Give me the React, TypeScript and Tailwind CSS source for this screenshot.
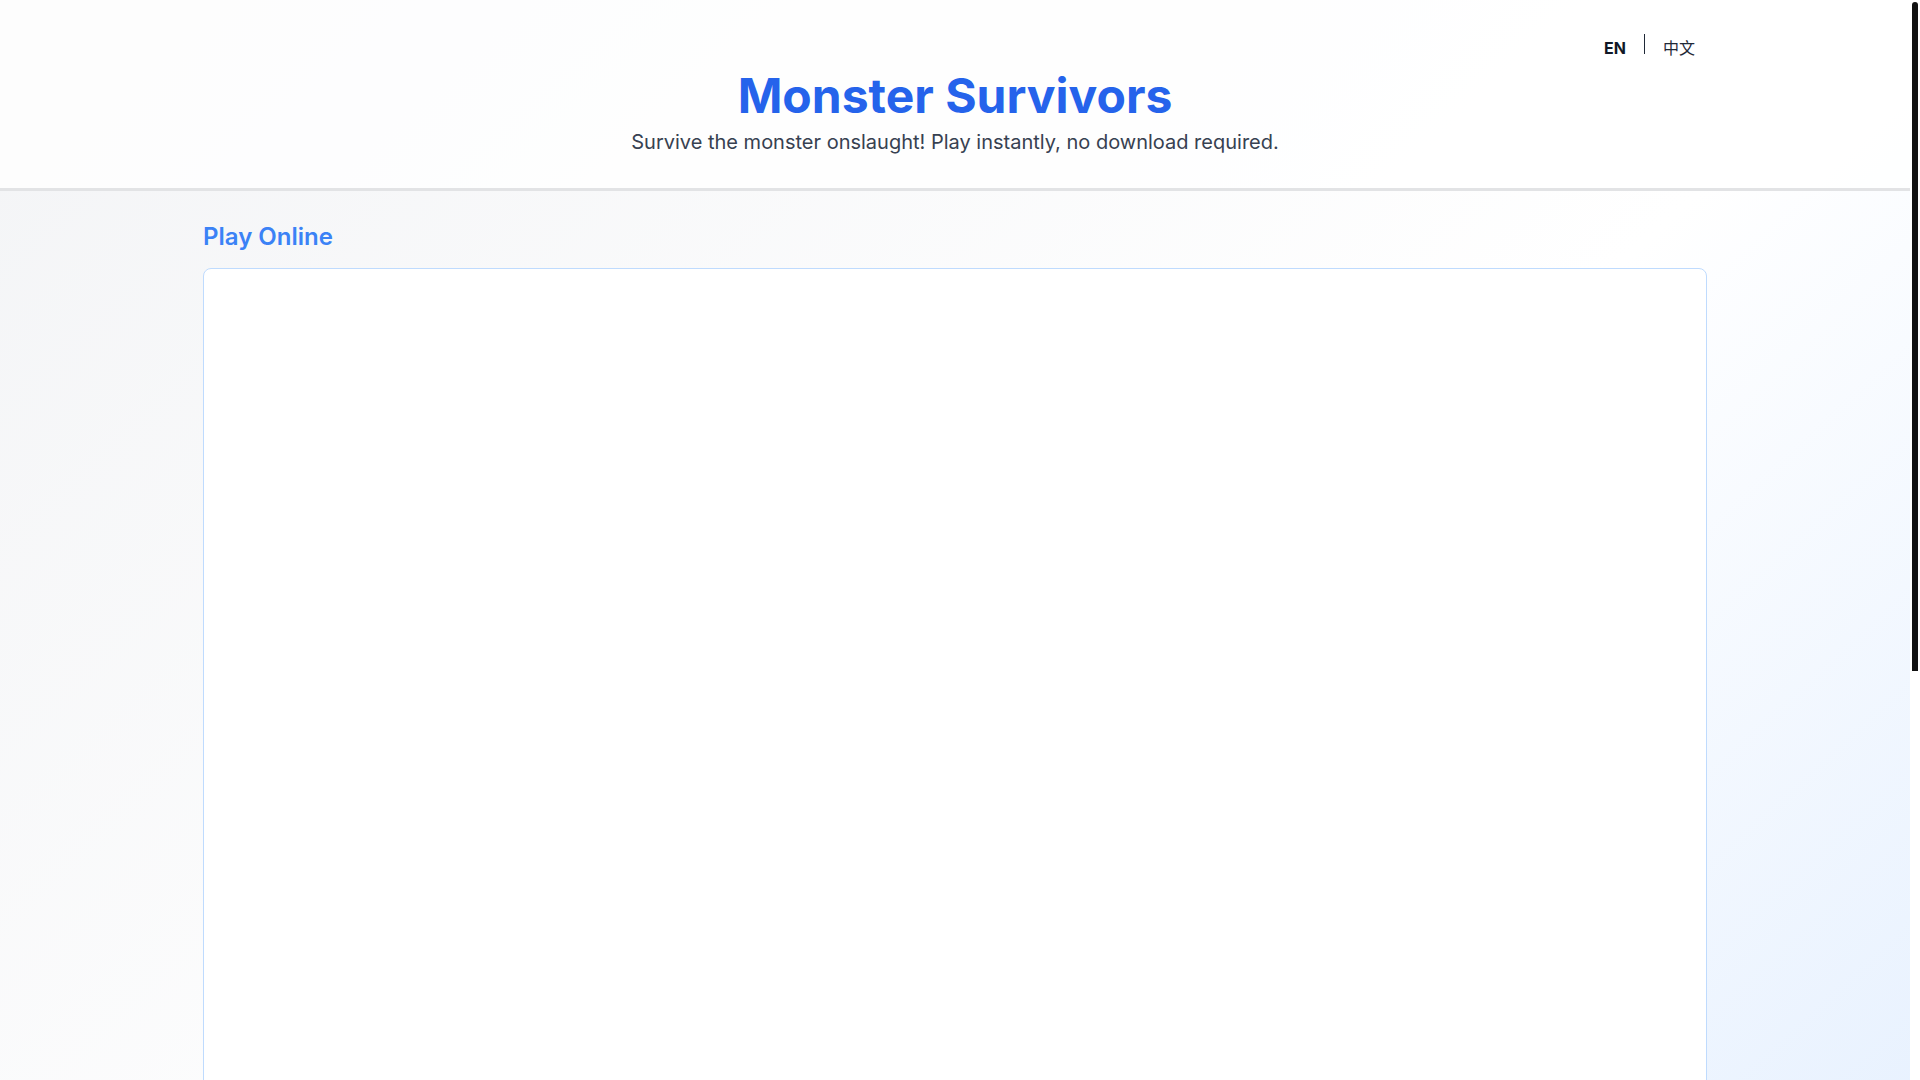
export default function App() {
  return (
    <div className="bg-white">
      {/* page column, leaving room for the scrollbar */}
      <div
        className="mr-[10px] bg-gradient-to-br from-[#f3f4f6] via-white to-[#dbeafe]"
        style={{ fontFamily: 'Inter, "Noto Sans CJK SC", sans-serif' }}
      >
        {/* Header */}
        <header className="bg-white/80 border-b-[3px] border-[#e2e3e5]">
          <div className="max-w-screen-2xl mx-auto px-4 pt-9 pb-8">
            <div className="flex items-center justify-end">
              <button className="px-3 text-base font-bold text-[#111827] leading-6">EN</button>
              <span className="w-px h-5 bg-[#1f2937] mx-[6px] -mt-2" />
              <button className="px-3 text-base text-[#1f2937] leading-6">中文</button>
            </div>
            <h1 className="mt-3 text-center text-5xl font-bold text-[#2563eb] leading-none">
              Monster Survivors
            </h1>
            <p className="mt-2 text-center text-xl text-[#374151]">
              Survive the monster onslaught! Play instantly, no download required.
            </p>
          </div>
        </header>

        {/* Game */}
        <main className="max-w-screen-2xl mx-auto px-4 pt-[30px] pb-8">
          <h2 className="text-2xl font-semibold text-[#3b82f6] mb-[15px]">Play Online</h2>
          <div className="h-[1440px] bg-white border border-[#bfdbfe] rounded-lg" />
        </main>
      </div>

      {/* scrollbar */}
      <div className="fixed right-0 top-0 h-screen w-[10px] bg-white px-[2px] pt-[2px]">
        <div className="h-[669px] rounded-t-full rounded-b-sm bg-[#111]" />
      </div>
    </div>
  )
}
